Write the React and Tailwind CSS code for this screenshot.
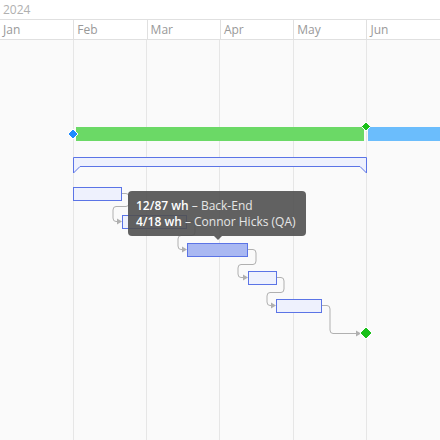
export default function App() {
  const months = ["Jan", "Feb", "Mar", "Apr", "May", "Jun"];
  const xs = [0, 73, 146, 219, 293, 366];
  const conn = (d, k) => <path key={k} d={d} fill="none" stroke="#b0b0b0" strokeWidth="1" />;
  const arrow = (x, y, k) => <path key={k} d={`M${x} ${y} l-5 -3 v6 z`} fill="#b0b0b0" />;
  return (
    <div className="w-[440px] h-[440px] overflow-hidden relative bg-[#fafafa]" style={{ fontFamily: '"Open Sans", sans-serif' }}>
      <div className="h-[20px] bg-white border-b border-[#e0e0e0] text-[12px] leading-[19px] text-[#b0b0b0] px-[3px]">2024</div>
      <div className="h-[20px] bg-white border-b border-[#e0e0e0] flex text-[12px] leading-[19px] text-[#999]">
        {months.map((m, i) => (
          <div key={m} className={`px-[3px] border-[#e0e0e0] ${i ? "border-l" : ""} ${i < 5 ? "w-[73.3px]" : "flex-1"}`}>{m}</div>
        ))}
      </div>
      <svg className="absolute left-0 top-0" width="440" height="440">
        {xs.slice(1).map((x) => <line key={x} x1={x + 0.5} y1="40" x2={x + 0.5} y2="440" stroke="#e6e6e6" />)}
        <rect x="76" y="127" width="288" height="14" fill="#6bd966" />
        <rect x="368" y="127" width="72" height="14" fill="#6bbdfc" />
        <path d="M73 129 l5 5 -5 5 -5 -5z" fill="#1e8cff" stroke="#fff" strokeWidth="1" />
        <path d="M366 122 l4.5 4.5 -4.5 4.5 -4.5 -4.5z" fill="#19c019" stroke="#fff" strokeWidth="1" />
        <path d="M73.5 157.5 H366.5 V173 L360 166.5 H80 L73.5 173 Z" fill="#eef1fd" stroke="#5b74e6" />
        <rect x="73.5" y="187.5" width="48" height="13" fill="#eef1fd" stroke="#5b74e6" />
        <rect x="122.5" y="215.5" width="64" height="13" fill="#eef1fd" stroke="#5b74e6" />
        <rect x="187.5" y="243.5" width="60" height="13" fill="#a9b8f2" stroke="#5b74e6" />
        <rect x="248.5" y="271.5" width="28" height="13" fill="#eef1fd" stroke="#5b74e6" />
        <rect x="276.5" y="299.5" width="45" height="13" fill="#eef1fd" stroke="#5b74e6" />
        {conn("M122 193.5 H126 Q129 193.5 129 197 V203 Q129 206.5 126 206.5 H116 Q113 206.5 113 210 V218 Q113 221.5 116 221.5 H118", 1)}
        {arrow(122, 221.5, 2)}
        {conn("M187 221.5 H192 Q195 221.5 195 225 V232 Q195 235.5 192 235.5 H181 Q178 235.5 178 239 V246 Q178 249.5 181 249.5 H183", 3)}
        {arrow(187, 249.5, 4)}
        {conn("M248 249.5 H253 Q256 249.5 256 253 V261 Q256 264.5 253 264.5 H241 Q238 264.5 238 268 V274 Q238 277.5 241 277.5 H244", 5)}
        {arrow(248, 277.5, 6)}
        {conn("M277 277.5 H281 Q284 277.5 284 281 V289 Q284 292.5 281 292.5 H270 Q267 292.5 267 296 V302 Q267 305.5 270 305.5 H272", 7)}
        {arrow(276, 305.5, 8)}
        {conn("M322 305.5 H327 Q330 305.5 330 309 V330 Q330 333.5 333 333.5 H356", 9)}
        {arrow(361, 333.5, 10)}
        <path d="M366 327 l6 6 -6 6 -6 -6z" fill="#19c019" stroke="#fff" strokeWidth="1" />
      </svg>
      <div className="absolute left-[128px] top-[191px] w-[178px] h-[45px] rounded-[4px] bg-[#505050]/90 text-white text-[12px] leading-[16px] px-[8px] pt-[7px]">
        <div><span className="font-semibold">12/87 wh</span> <span className="text-[#e6e6e6]">– Back-End</span></div>
        <div><span className="font-semibold">4/18 wh</span> <span className="text-[#e6e6e6]">– Connor Hicks (QA)</span></div>
        <div className="absolute left-[86px] -bottom-[4px] w-0 h-0 border-l-[4px] border-r-[4px] border-t-[4px] border-l-transparent border-r-transparent border-t-[#505050]/90" />
      </div>
    </div>
  );
}
